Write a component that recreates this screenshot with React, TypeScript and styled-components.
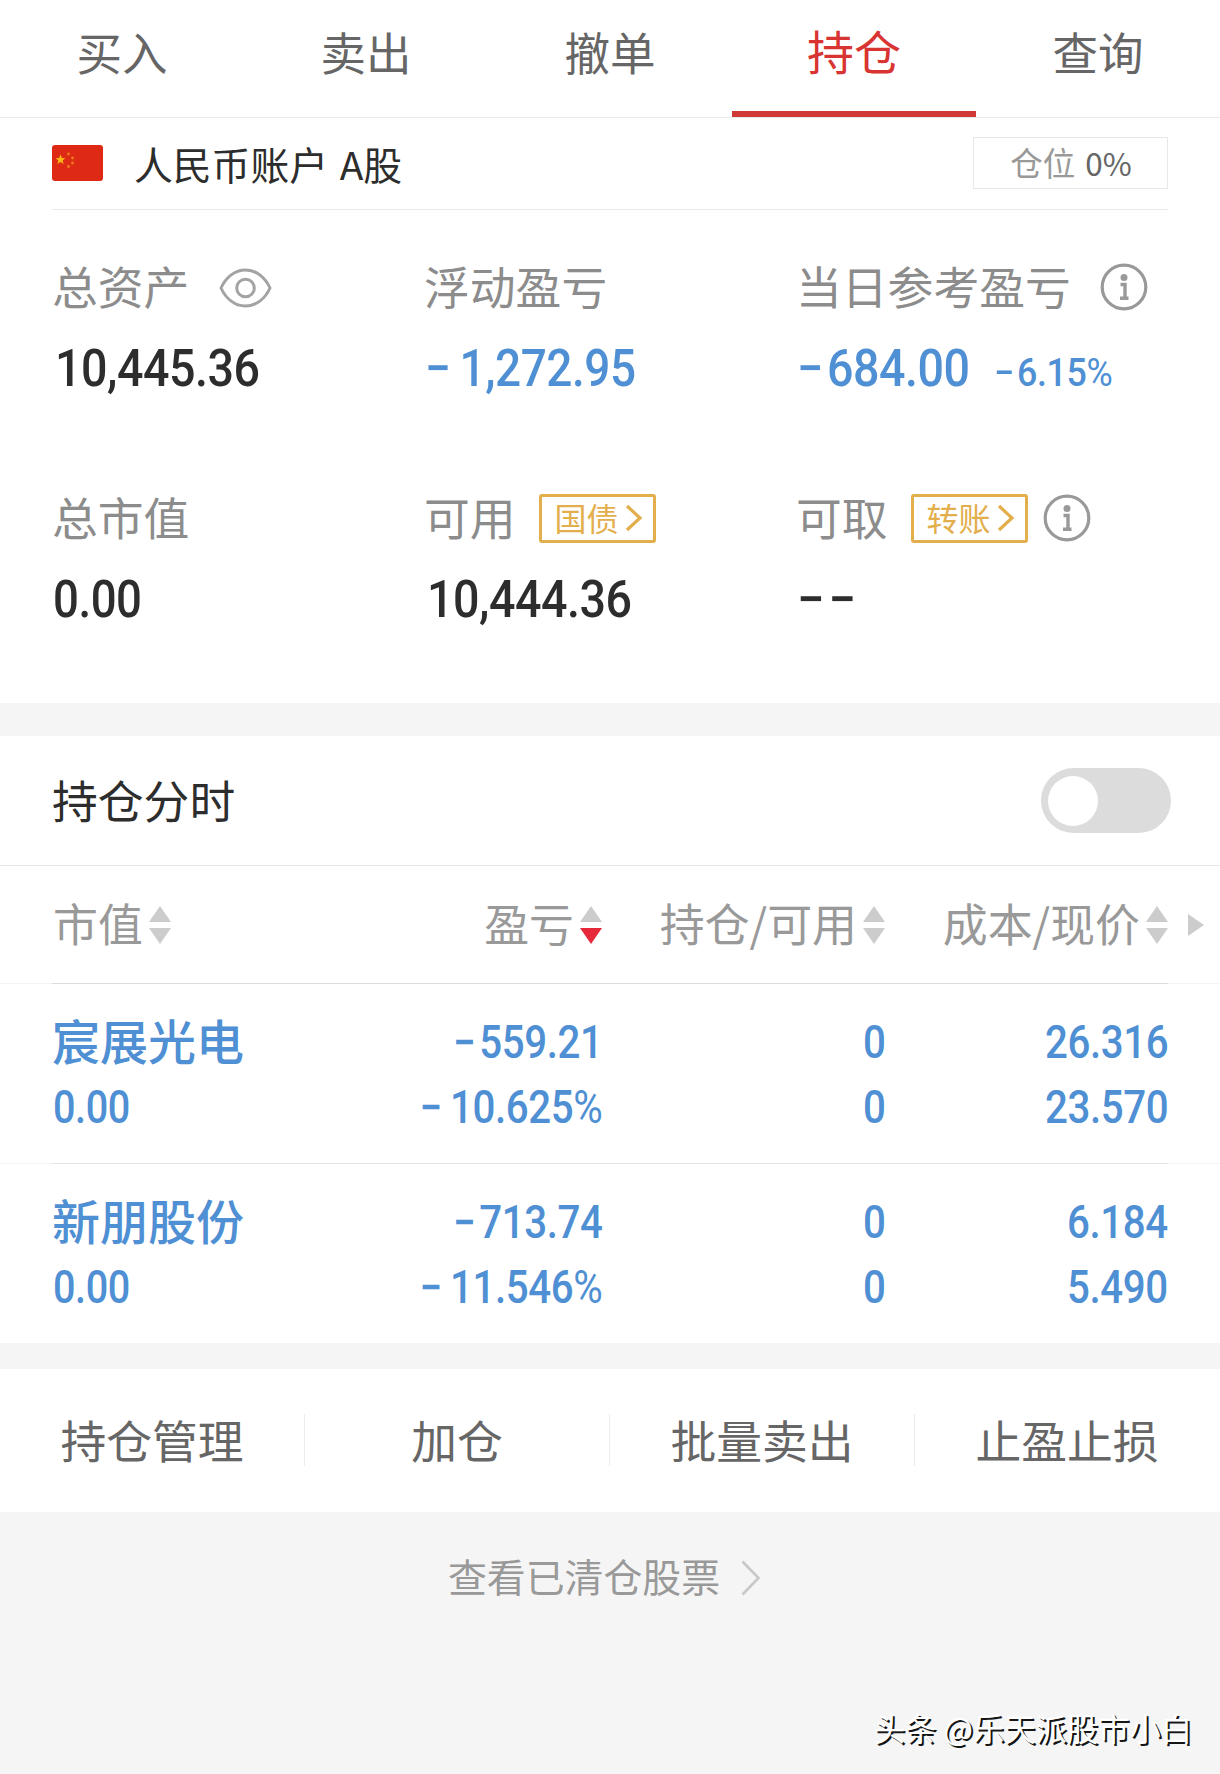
import React from "react";
import styled, { createGlobalStyle } from "styled-components";

const GlobalStyle = createGlobalStyle`
  * { box-sizing: border-box; }
  body {
    margin: 0;
    background: #f5f5f5;
    color: #2d2d2d;
    font-family: "Noto Sans CJK SC", sans-serif;
  }
`;

const Page = styled.main`
  width: 1220px;
  height: 1774px;
  display: flex;
  flex-direction: column;
  background: #f5f5f5;
  overflow: hidden;
`;

const TabBar = styled.nav`
  display: grid;
  grid-template-columns: repeat(5, 1fr);
  height: 118px;
  background: #fff;
  border-bottom: 1px solid #e9e9e9;
`;

const Tab = styled.button<{ $active?: boolean }>`
  border: 0;
  border-bottom: 6px solid ${(p) => (p.$active ? "#cf3a37" : "transparent")};
  background: none;
  padding: 0 0 ${(p) => (p.$active ? 13 : 8)}px;
  font: 400 ${(p) => (p.$active ? 47 : 45.5)}px/1 "Noto Sans CJK SC", sans-serif;
  color: ${(p) => (p.$active ? "#d83431" : "#666")};
`;

/* Lifts CJK glyphs to the optical centre of a centred row. */
const Label = styled.span<{ $lift?: number }>`
  padding-bottom: ${(p) => p.$lift ?? 4}px;
`;

const AccountSection = styled.section`
  height: 585px;
  padding: 0 52px;
  background: #fff;
`;

const AccountRow = styled.header`
  display: flex;
  align-items: center;
  height: 92px;
  padding-bottom: 2px;
  border-bottom: 1px solid #e9e9e9;
`;

const AccountName = styled.h1`
  flex: 1;
  margin: 0 0 0 31px;
  font-size: 38.8px;
  line-height: 46px;
  font-weight: 400;
  word-spacing: 3px;
`;

const PositionBadge = styled.div`
  display: flex;
  align-items: center;
  justify-content: center;
  gap: 10px;
  width: 195px;
  height: 52px;
  padding: 0 0 2px 1px;
  border: 1px solid #e8e8e8;
  font-size: 32.5px;
  line-height: 40px;
  color: #999;
`;

const PositionValue = styled.span`
  font-size: 31.5px;
  color: #666;
`;

const StatGrid = styled.div`
  display: grid;
  grid-template-columns: repeat(3, 372px);
  grid-auto-rows: 231px;
  padding-top: 47px;
`;

const Stat = styled.div`
  padding-left: 1px;
`;

const StatLabel = styled.div`
  display: flex;
  align-items: center;
  height: 60px;
  margin-left: -1px;
  font-size: 45.8px;
  line-height: 56px;
  white-space: nowrap;
  color: #8c8c8c;
`;

const StatValue = styled.div<{ $loss?: boolean; $indent?: number }>`
  display: flex;
  align-items: baseline;
  margin-top: 22px;
  padding-left: ${(p) => p.$indent ?? 0}px;
  height: 60px;
  line-height: 60px;
  color: ${(p) => (p.$loss ? "#4f8fd3" : "#2d2d2d")};
`;

const Figure = styled.span<{ $size: number; $end?: boolean; $stretch?: number }>`
  display: inline-block;
  font-family: Roboto, sans-serif;
  font-size: ${(p) => p.$size}px;
  font-weight: 500;
  letter-spacing: -0.01em;
  white-space: nowrap;
  transform: scaleX(${(p) => p.$stretch ?? 0.905});
  transform-origin: ${(p) => (p.$end ? "right" : "left")} center;
`;

const Sign = styled.span<{ $wide?: boolean }>`
  margin-right: ${(p) => (p.$wide ? 0.2 : 0.09)}em;
`;

const Percent = styled.span`
  font-weight: 400;
`;

const IconSlot = styled.span<{ $gap: number }>`
  display: flex;
  margin-left: ${(p) => p.$gap}px;
`;

const LinkTag = styled.button`
  display: flex;
  align-items: center;
  justify-content: space-between;
  width: 117px;
  height: 49px;
  margin-left: 23px;
  padding: 0 10px 0 13px;
  border: 3px solid #e3ae4c;
  border-radius: 3px;
  background: none;
  font: 400 32px/40px "Noto Sans CJK SC", sans-serif;
  color: #e3ae4c;
`;

const Gap = styled.div<{ $height: number }>`
  height: ${(p) => p.$height}px;
  background: #f5f5f5;
`;

const ToggleRow = styled.div`
  display: flex;
  align-items: center;
  justify-content: space-between;
  height: 130px;
  padding: 0 49px 0 52px;
  background: #fff;
  border-bottom: 1px solid #e6e6e6;
  font-size: 45.8px;
  line-height: 60px;
`;

const Switch = styled.button`
  display: flex;
  align-items: center;
  width: 130px;
  height: 65px;
  padding: 0 7px;
  border: 0;
  border-radius: 33px;
  background: #dcdcdc;
`;

const Knob = styled.span`
  width: 50px;
  height: 50px;
  border-radius: 50%;
  background: #fff;
`;

const TableHead = styled.div`
  display: flex;
  align-items: center;
  gap: 20px;
  height: 117px;
  padding-left: 53px;
  background: #fff;
`;

const Columns = styled.div`
  display: grid;
  grid-template-columns: 549px 283px 283px;
  width: 1115px;
`;

const FirstColumns = styled.div`
  display: flex;
  justify-content: space-between;
`;

const HeadCell = styled.button`
  display: flex;
  align-items: center;
  justify-content: flex-end;
  gap: 6px;
  border: 0;
  padding: 0;
  background: none;
  font: 400 44.9px/60px "Noto Sans CJK SC", sans-serif;
  white-space: nowrap;
  color: #999;
`;

const Rule = styled.hr<{ $color: string }>`
  flex: none;
  width: 1220px;
  height: 1px;
  margin: 0;
  border: 0;
  background: linear-gradient(
    to right,
    #f4f4f4 52px,
    ${(p) => p.$color} 52px,
    ${(p) => p.$color} 1168px,
    #f4f4f4 1168px
  );
`;

const HoldingRow = styled.div`
  height: 179px;
  padding: 26px 52px 0 53px;
  background: #fff;
  color: #4f8fd3;
`;

const Stack = styled.div<{ $end?: boolean }>`
  display: flex;
  flex-direction: column;
  align-items: ${(p) => (p.$end ? "flex-end" : "flex-start")};
  line-height: 65px;
`;

const StockName = styled.span`
  height: 65px;
  margin: -3px 0 3px -1px;
  font-size: 48px;
  font-weight: 500;
  line-height: 65px;
`;

const ActionBar = styled.div`
  display: grid;
  grid-template-columns: repeat(4, 1fr);
  align-items: center;
  height: 143px;
  padding-bottom: 2px;
  background: #fff;
`;

const Action = styled.button`
  height: 52px;
  border: 0;
  border-right: 1px solid #ececec;
  padding: 0 0 2px;
  background: none;
  font: 400 45.8px/50px "Noto Sans CJK SC", sans-serif;
  color: #666;
  &:last-child { border-right-color: transparent; }
`;

const ClearedLink = styled.a`
  display: flex;
  align-items: center;
  justify-content: center;
  gap: 21px;
  height: 60px;
  margin-top: 36px;
  padding-right: 11px;
  font-size: 38.9px;
  line-height: 55px;
  color: #999;
`;

const Signature = styled.footer`
  margin: auto 28px 23px 0;
  text-align: right;
  font-size: 31.3px;
  line-height: 46px;
  color: #fff;
  text-shadow: 2px 2px 0 #151515;
`;

const ChinaFlag = () => (
  <svg width="51" height="36" viewBox="0 0 51 36">
    <rect width="51" height="36" rx="3" fill="#de2a14" />
    <polygon points="8.5,9.5 9.9,13 13.3,13.2 10.7,15.4 11.6,19 8.5,17 5.4,19 6.3,15.4 3.7,13.2 7.1,13" fill="#fbb515" />
    <g fill="#ee7a1c">
      <circle cx="16.5" cy="9" r="1.4" />
      <circle cx="20.5" cy="13" r="1.4" />
      <circle cx="20.5" cy="18" r="1.4" />
      <circle cx="16.5" cy="21.5" r="1.4" />
    </g>
  </svg>
);

const EyeIcon = () => (
  <svg width="53" height="42" viewBox="0 -2 53 42" fill="none" stroke="#a3a3a3" strokeWidth="3">
    <path d="M2 20C7 9 16 2 26.500 2S46 9 51 20C46 31 37 38 26.500 38S7 31 2 20Z" strokeLinejoin="round" />
    <circle cx="26.500" cy="20" r="8.800" />
  </svg>
);

const InfoIcon = () => (
  <svg width="48" height="48" viewBox="0 0 48 48">
    <circle cx="24" cy="24" r="21.800" fill="none" stroke="#999" strokeWidth="3.200" />
    <circle cx="24" cy="14.500" r="3.500" fill="#999" />
    <path d="M20.500 21.500H25V35M20 35.300H28.500" fill="none" stroke="#999" strokeWidth="3.400" />
  </svg>
);

const TagChevron = () => (
  <svg width="18" height="28" viewBox="0 0 18 28" fill="none" stroke="#e3ae4c" strokeWidth="3.200">
    <path d="M2 2L15 14L2 26" />
  </svg>
);

const SortIcon = ({ down }: { down?: boolean }) => (
  <svg width="22" height="38" viewBox="0 0 22 38">
    <path d="M11 0L22 16H0Z" fill="#ccc" />
    <path d="M0 22H22L11 38Z" fill={down ? "#e5293b" : "#ccc"} />
  </svg>
);

const holdings = [
  { name: "宸展光电", value: "0.00", profit: "−559.21", rate: "−10.625%", held: "0", usable: "0", cost: "26.316", price: "23.570" },
  { name: "新朋股份", value: "0.00", profit: "−713.74", rate: "−11.546%", held: "0", usable: "0", cost: "6.184", price: "5.490" },
];

type AmountProps = { size: number; text: string; end?: boolean; stretch?: number };

const Amount = ({ size, text, end, stretch }: AmountProps) => {
  const signed = text.startsWith("−");
  const percent = text.endsWith("%");
  return (
    <Figure $size={size} $end={end} $stretch={stretch}>
      {signed && <Sign $wide={text[1] === "1"}>−</Sign>}
      {text.slice(signed ? 1 : 0, percent ? -1 : undefined)}
      {percent && <Percent>%</Percent>}
    </Figure>
  );
};

const Pair = ({ top, bottom }: { top: string; bottom: string }) => (
  <Stack $end>
    <Amount size={45.5} text={top} stretch={0.885} end />
    <Amount size={45.5} text={bottom} stretch={0.885} end />
  </Stack>
);

export default function App() {
  return (
    <>
      <GlobalStyle />
      <Page>
        <TabBar>
          {["买入", "卖出", "撤单", "持仓", "查询"].map((t) => (
            <Tab key={t} $active={t === "持仓"}>{t}</Tab>
          ))}
        </TabBar>

        <AccountSection>
          <AccountRow>
            <ChinaFlag />
            <AccountName>人民币账户 A股</AccountName>
            <PositionBadge>
              仓位<PositionValue>0%</PositionValue>
            </PositionBadge>
          </AccountRow>
          <StatGrid>
            <Stat>
              <StatLabel>
                <Label>总资产</Label>
                <IconSlot $gap={30}><EyeIcon /></IconSlot>
              </StatLabel>
              <StatValue $indent={2}><Amount size={51.5} text="10,445.36" /></StatValue>
            </Stat>
            <Stat>
              <StatLabel><Label>浮动盈亏</Label></StatLabel>
              <StatValue $loss><Amount size={51.5} text="−1,272.95" stretch={0.892} /></StatValue>
            </Stat>
            <Stat>
              <StatLabel>
                <Label>当日参考盈亏</Label>
                <IconSlot $gap={29}><InfoIcon /></IconSlot>
              </StatLabel>
              <StatValue $loss>
                <Amount size={51.5} text="−684.00" />
                <IconSlot $gap={6}><Amount size={38.5} text="−6.15%" stretch={0.93} /></IconSlot>
              </StatValue>
            </Stat>
            <Stat>
              <StatLabel><Label>总市值</Label></StatLabel>
              <StatValue><Amount size={51.5} text="0.00" stretch={0.885} /></StatValue>
            </Stat>
            <Stat>
              <StatLabel>
                <Label>可用</Label>
                <LinkTag><Label $lift={2}>国债</Label><TagChevron /></LinkTag>
              </StatLabel>
              <StatValue $indent={2}><Amount size={51.5} text="10,444.36" /></StatValue>
            </Stat>
            <Stat>
              <StatLabel>
                <Label>可取</Label>
                <LinkTag><Label $lift={2}>转账</Label><TagChevron /></LinkTag>
                <IconSlot $gap={15}><InfoIcon /></IconSlot>
              </StatLabel>
              <StatValue><Amount size={51.5} text="−−" stretch={0.95} /></StatValue>
            </Stat>
          </StatGrid>
        </AccountSection>

        <Gap $height={33} />

        <ToggleRow>
          <Label $lift={3}>持仓分时</Label>
          <Switch aria-label="持仓分时"><Knob /></Switch>
        </ToggleRow>

        <TableHead>
          <Columns>
            <FirstColumns>
              <HeadCell><Label $lift={3}>市值</Label><SortIcon /></HeadCell>
              <HeadCell><Label $lift={3}>盈亏</Label><SortIcon down /></HeadCell>
            </FirstColumns>
            <HeadCell><Label $lift={3}>持仓/可用</Label><SortIcon /></HeadCell>
            <HeadCell><Label $lift={3}>成本/现价</Label><SortIcon /></HeadCell>
          </Columns>
          <svg width="16" height="22" viewBox="0 0 16 22"><path d="M0 0L16 11L0 22Z" fill="#ccc" /></svg>
        </TableHead>
        <Rule $color="#dcdcdc" />

        {holdings.map((h, i) => (
          <React.Fragment key={h.name}>
            {i > 0 && <Rule $color="#e4e4e4" />}
            <HoldingRow>
              <Columns>
                <FirstColumns>
                  <Stack>
                    <StockName>{h.name}</StockName>
                    <Amount size={45.5} text={h.value} stretch={0.87} />
                  </Stack>
                  <Pair top={h.profit} bottom={h.rate} />
                </FirstColumns>
                <Pair top={h.held} bottom={h.usable} />
                <Pair top={h.cost} bottom={h.price} />
              </Columns>
            </HoldingRow>
          </React.Fragment>
        ))}

        <Gap $height={26} />

        <ActionBar>
          {["持仓管理", "加仓", "批量卖出", "止盈止损"].map((a) => (
            <Action key={a}>{a}</Action>
          ))}
        </ActionBar>

        <ClearedLink>
          <Label $lift={5}>查看已清仓股票</Label>
          <svg width="20" height="36" viewBox="0 0 20 36" fill="none" stroke="#c8c8c8" strokeWidth="2.600">
            <path d="M1.500 1.500L17.500 18L1.500 34.500" />
          </svg>
        </ClearedLink>

        <Signature>头条 @乐天派股市小白</Signature>
      </Page>
    </>
  );
}
